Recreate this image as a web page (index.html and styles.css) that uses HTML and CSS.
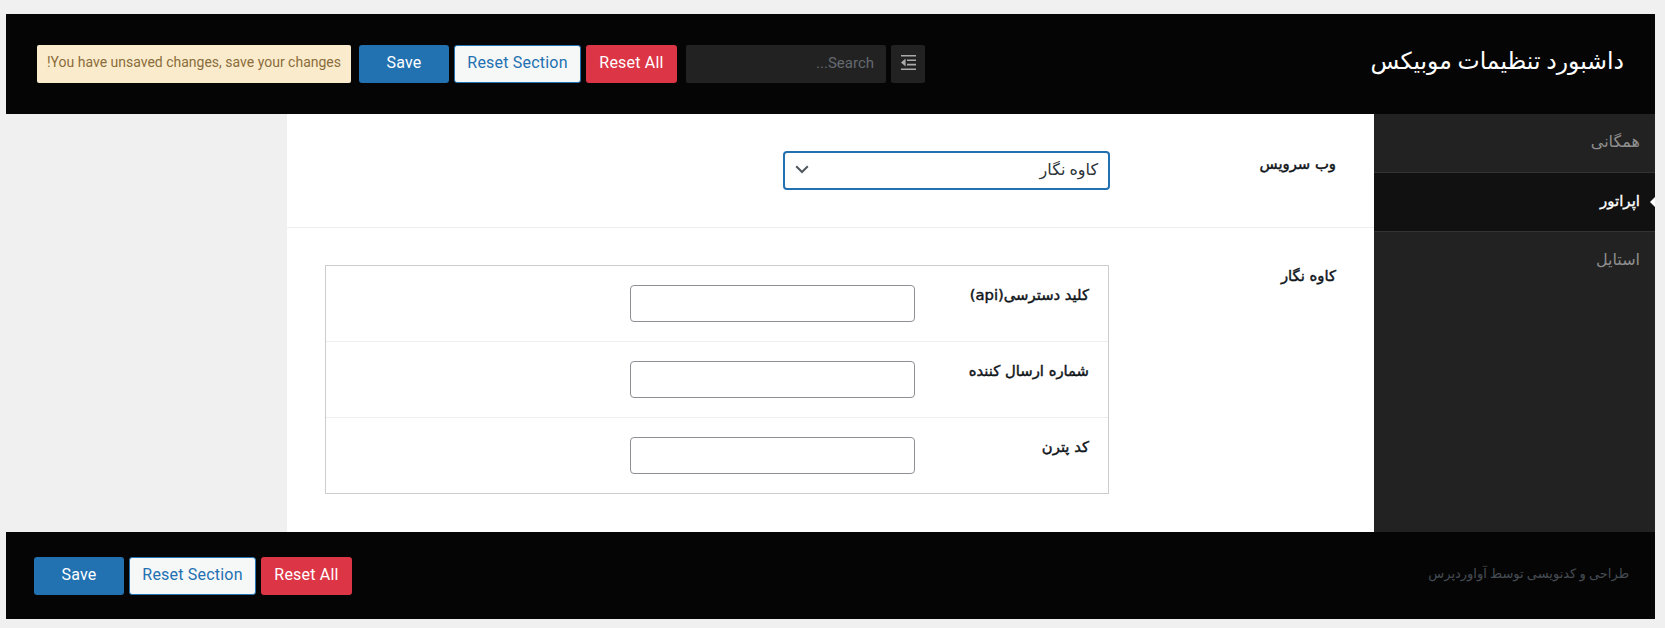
FILE: index.html
```html
<!DOCTYPE html>
<html lang="fa" dir="rtl">
<head>
<meta charset="utf-8">
<title>داشبورد تنظیمات موبیکس</title>
<link rel="stylesheet" href="styles.css">
</head>
<body>
<div class="panel">
  <header class="bar top">
    <h1 class="title">داشبورد تنظیمات موبیکس</h1>
    <div class="tools">
      <button class="toggle" type="button" aria-label="menu">
        <svg width="15" height="15" viewBox="0 0 15 15"><path d="M0 0h15v1.6H0zM6 4.4h9V6H6zM6 8.8h9v1.6H6zM0 13.4h15V15H0zM4.6 3.4v8.2L0 7.5z" fill="#aaa"/></svg>
      </button>
      <input class="search" type="text" placeholder="Search...">
      <div class="actions">
        <button class="btn danger" type="button">Reset All</button>
        <button class="btn outline" type="button">Reset Section</button>
        <button class="btn primary" type="button">Save</button>
      </div>
      <div class="notice">You have unsaved changes, save your changes!</div>
    </div>
  </header>
  <div class="main">
    <nav class="side">
      <a class="item">همگانی</a>
      <a class="item active">اپراتور</a>
      <a class="item">استایل</a>
    </nav>
    <section class="content">
      <div class="field first">
        <div class="label">وب سرویس</div>
        <div class="control">
          <div class="select">
            <span>کاوه نگار</span>
            <svg width="14" height="9" viewBox="0 0 14 9"><path d="M1.2 1.2 7 7l5.8-5.8" fill="none" stroke="#50575e" stroke-width="2"/></svg>
          </div>
        </div>
      </div>
      <div class="field second">
        <div class="label">کاوه نگار</div>
        <div class="control">
          <div class="box">
            <div class="row"><div class="row-label">کلید دسترسی(api)</div><input class="text" type="text"></div>
            <div class="row"><div class="row-label">شماره ارسال کننده</div><input class="text" type="text"></div>
            <div class="row"><div class="row-label">کد پترن</div><input class="text" type="text"></div>
          </div>
        </div>
      </div>
    </section>
  </div>
  <footer class="bar bottom">
    <div class="credit">طراحی و کدنویسی توسط آواوردپرس</div>
    <div class="actions">
      <button class="btn danger" type="button">Reset All</button>
      <button class="btn outline" type="button">Reset Section</button>
      <button class="btn primary" type="button">Save</button>
    </div>
  </footer>
</div>
</body>
</html>
```
FILE: styles.css
```css
* { box-sizing: border-box; }
html, body { margin: 0; }
body {
  background: #f0f0f1;
  padding: 14px 10px 9px 6px;
  font-family: Roboto, "DejaVu Sans", sans-serif;
  color: #1d2327;
}
.panel { width: 1649px; }
.bar {
  display: flex;
  justify-content: space-between;
  align-items: center;
  background: #050505;
}
.top { height: 100px; padding: 0 31px; }
.bottom { height: 87px; padding: 0 26px 0 28px; }
.title {
  margin: 0 0 7px;
  font-size: 23.5px;
  font-weight: 400;
  color: #fff;
}
.tools { display: flex; align-items: center; }
.toggle {
  display: flex;
  align-items: center;
  justify-content: center;
  width: 34px;
  height: 38px;
  padding: 0 0 4px;
  border: 0;
  border-radius: 2px;
  background: #222;
}
.search {
  width: 200px;
  height: 38px;
  margin: 0 5px 0 9px;
  padding: 0 12px 3px;
  border: 0;
  border-radius: 2px;
  outline: 0;
  background: #222;
  color: #fff;
  font: 15px Roboto, sans-serif;
}
.search::placeholder { color: #646970; opacity: 1; }
.actions { display: flex; gap: 5px; }
.btn {
  height: 38px;
  padding: 0 0 3px;
  border: 1px solid transparent;
  border-radius: 3px;
  font: 400 16px Roboto, sans-serif;
  letter-spacing: .2px;
}
.danger { width: 91px; background: #dc3545; color: #fff; }
.outline {
  width: 127px;
  border-color: #2271b1;
  background: #f6f7f7;
  color: #2271b1;
}
.primary { width: 90px; background: #2271b1; color: #fff; }
.notice {
  width: 314px;
  height: 38px;
  margin-right: 8px;
  padding: 0 10px;
  border-radius: 2px;
  background: #faebcc;
  color: #8a6d3b;
  font-size: 14px;
  line-height: 34px;
  white-space: nowrap;
}
.main { display: flex; height: 418px; }
.side { flex: 0 0 281px; background: #222; }
.item {
  display: block;
  position: relative;
  height: 59px;
  padding: 16px 15px 0 0;
  border-bottom: 1px solid #333;
  color: #8f8f8f;
  font-size: 16px;
  line-height: 24px;
}
.item:last-child { border-bottom: 0; }
.active {
  background: #111;
  color: #fff;
  font-size: 15px;
  -webkit-text-stroke: .35px #fff;
}
.active::after {
  content: "";
  position: absolute;
  right: 0;
  top: 24px;
  border: 5px solid transparent;
  border-left: 0;
  border-right-color: #fff;
}
.content { flex: 0 0 1087px; background: #fff; }
.field { display: flex; padding: 37px 38px 0 38px; }
.first { height: 114px; border-bottom: 1px solid #eee; }
.label {
  flex: 0 0 227px;
  font-family: "DejaVu Sans", sans-serif;
  font-size: 14.8px;
  line-height: 22px;
  -webkit-text-stroke: .45px #10151a;
  color: #10151a;
}
.first .label { padding-top: 2px; }
.control { flex: 1 1 auto; }
.select {
  display: flex;
  align-items: center;
  justify-content: space-between;
  width: 327px;
  height: 39px;
  margin-right: -1px;
  padding: 0 10px 2px;
  border: 2px solid #2271b1;
  border-radius: 4px;
  color: #2c3338;
  font-size: 16px;
}
.box { width: 784px; border: 1px solid #ccc; }
.row {
  display: flex;
  height: 76px;
  padding: 19px 19px 0 0;
  border-bottom: 1px solid #eee;
}
.row:last-child { height: 75px; border-bottom: 0; }
.row-label {
  flex: 0 0 174px;
  font-family: "DejaVu Sans", sans-serif;
  font-size: 14.8px;
  line-height: 20px;
  -webkit-text-stroke: .45px #10151a;
  color: #10151a;
}
.text {
  width: 285px;
  height: 37px;
  border: 1px solid #8c8f94;
  border-radius: 4px;
  background: #fff;
}
.credit { margin-bottom: 5px; color: #454c53; font-size: 13px; }
```
